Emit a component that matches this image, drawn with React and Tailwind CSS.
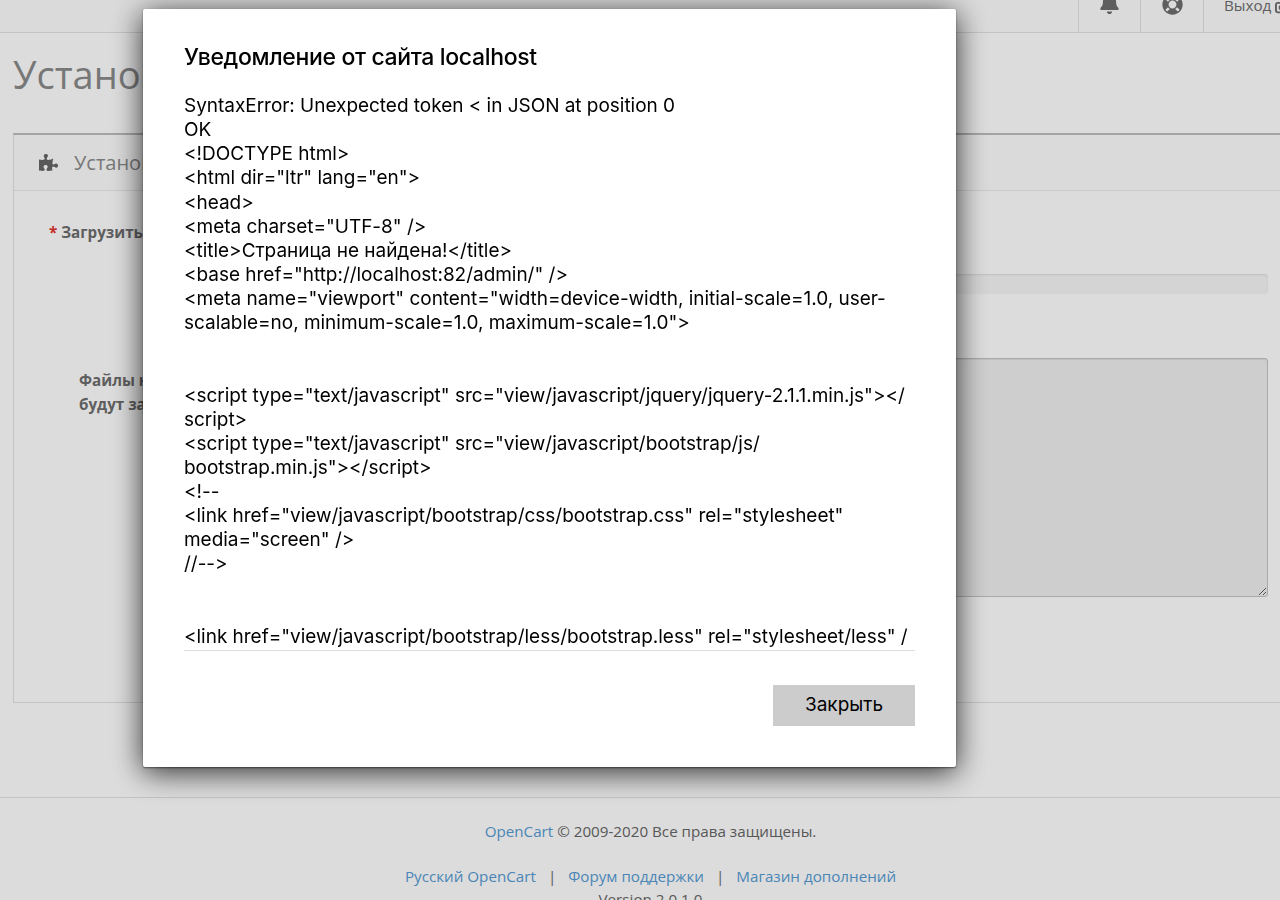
import { FaBell, FaLifeRing, FaPuzzlePiece, FaSignOutAlt } from 'react-icons/fa';

const modalLines = [
  'SyntaxError: Unexpected token < in JSON at position 0',
  'OK',
  '<!DOCTYPE html>',
  '<html dir="ltr" lang="en">',
  '<head>',
  '<meta charset="UTF-8" />',
  '<title>Страница не найдена!</title>',
  '<base href="http://localhost:82/admin/" />',
  '<meta name="viewport" content="width=device-width, initial-scale=1.0, user-',
  'scalable=no, minimum-scale=1.0, maximum-scale=1.0">',
  '',
  '',
  '<script type="text/javascript" src="view/javascript/jquery/jquery-2.1.1.min.js"></',
  'script>',
  '<script type="text/javascript" src="view/javascript/bootstrap/js/',
  'bootstrap.min.js"></script>',
  '<!--',
  '<link href="view/javascript/bootstrap/css/bootstrap.css" rel="stylesheet"',
  'media="screen" />',
  '//-->',
  '',
  '',
  '<link href="view/javascript/bootstrap/less/bootstrap.less" rel="stylesheet/less" /',
  '>',
];

function Header() {
  return (
    <div className="flex h-[33px] justify-end overflow-hidden border-b border-[#e1e1e1] bg-[#fcfcfc]">
      <div className="flex w-[62px] justify-center border-l border-[#e1e1e1] text-[21px] text-[#6d6d6d]">
        <FaBell className="-mt-[7px]" />
      </div>
      <div className="flex w-[63px] justify-center border-l border-[#e1e1e1] text-[21px] text-[#6d6d6d]">
        <FaLifeRing className="-mt-[6px]" />
      </div>
      <div className="flex w-[77px] gap-1 overflow-hidden whitespace-nowrap border-l border-[#e1e1e1] pl-5 text-[15.2px] leading-[10px] text-[#6d6d6d]">
        Выход <FaSignOutAlt className="shrink-0" />
      </div>
    </div>
  );
}

function InstallPanel() {
  return (
    <div className="ml-[13px] border border-t-2 border-[#e1e1e1] border-t-[#bdbdbd] border-r-0">
      <div className="flex h-[56px] items-center border-b border-[#e8e8e8] bg-[#fcfcfc] pl-[25px] text-[20px] text-[#8a8a8a]">
        <FaPuzzlePiece className="mr-[16px] text-[19px] text-[#666666]" />
        Установка дополнений
      </div>
      <div className="h-[511px] text-[15.2px] font-bold leading-[24px] text-[#6d6d6d]">
        <div className="flex pt-[29px]">
          <div className="w-[200px] pl-[35px]">
            <span className="mr-1 text-[#e0352f]">*</span>Загрузить файл
          </div>
        </div>
        <div className="mr-3 mt-[30px] ml-[300px] h-5 rounded-[4px] bg-[#f5f5f5] shadow-[inset_0_1px_2px_rgba(0,0,0,0.1)]" />
        <div className="mt-[64px] flex">
          <div className="w-[250px] pl-[65px] pt-[10px]">
            <div>Файлы не</div>
            <div>будут загружены</div>
          </div>
          <textarea
            readOnly
            className="mr-3 h-[239px] flex-1 rounded-[3px] border border-[#c4c4c4] bg-[#eeeeee] shadow-[inset_0_1px_1px_rgba(0,0,0,0.075)]"
          />
        </div>
      </div>
    </div>
  );
}

function Footer() {
  return (
    <div className="mt-[94px] border-t border-[#e1e1e1] pl-[21px] pt-[23px] text-center text-[15.2px] leading-[20px] text-[#666666]">
      <div>
        <span className="text-[#569bd3]">OpenCart</span> © 2009-2020 Все права защищены.
      </div>
      <div className="mt-[25px]">
        <span className="text-[#569bd3]">Русский OpenCart</span>
        <span className="mx-[12px]">|</span>
        <span className="text-[#569bd3]">Форум поддержки</span>
        <span className="mx-[12px]">|</span>
        <span className="text-[#569bd3]">Магазин дополнений</span>
      </div>
      <div className="mt-[3px]">Version 2.0.1.0</div>
    </div>
  );
}

function AlertModal() {
  return (
    <div className="fixed inset-0 bg-black/[.135]">
      <div className="absolute left-[143px] top-[9px] flex h-[758px] w-[813px] flex-col rounded-[2px] bg-white px-[41px] pt-[34px] shadow-[0_1px_2px_rgba(0,0,0,0.5),0_5px_30px_rgba(0,0,0,0.8)] font-['Inter',sans-serif] text-black [font-feature-settings:'calt'_0]">
        <div className="h-[51px] text-[23px] font-medium leading-[28px] tracking-[-0.35px]">Уведомление от сайта localhost</div>
        <div className="h-[557px] overflow-hidden border-b border-[#dddddd] text-[19px] leading-[24.13px] tracking-[-0.03px]">
          {modalLines.map((line, i) => (
            <div key={i} className="h-[24.13px] whitespace-pre">{line}</div>
          ))}
        </div>
        <div className="mt-[34px] flex justify-end">
          <button className="h-[41px] w-[142px] bg-[#cccccc] text-[19px]">Закрыть</button>
        </div>
      </div>
    </div>
  );
}

export default function App() {
  return (
    <div className="relative h-[900px] overflow-hidden bg-[#fefefe] font-['Open_Sans',sans-serif]">
      <Header />
      <div className="h-[100px] pl-[13px] pt-[14px] text-[38px] leading-[54px] text-[#8a8a8a]">Установка дополнений</div>
      <InstallPanel />
      <Footer />
      <AlertModal />
    </div>
  );
}
